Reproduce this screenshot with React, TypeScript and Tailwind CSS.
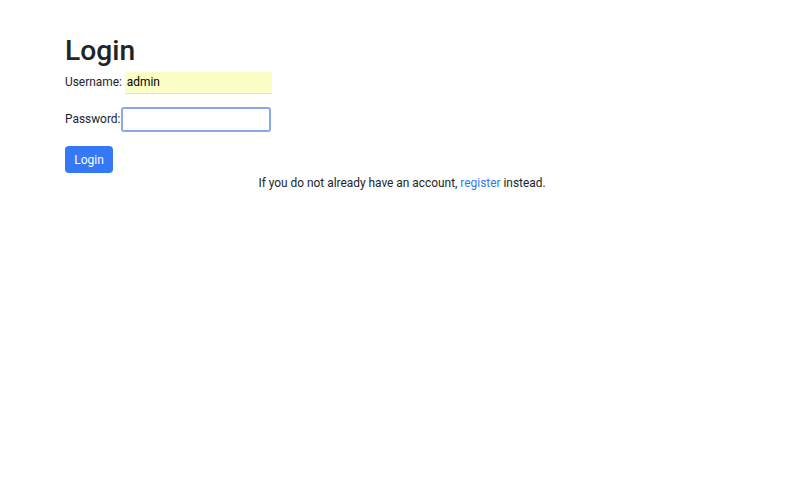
import React from "react";

export default function App() {
  return (
    <div className="min-h-screen bg-white text-[#212529]" style={{ fontFamily: "Roboto, 'Liberation Sans', Arial, sans-serif" }}>
      <div className="pl-[65px] pt-[33px]">
        <h1 className="text-[28.2px] font-medium leading-[36px]">Login</h1>
        <div className="mt-[3px] flex items-center h-[22px]">
          <span className="text-[11.9px] mr-[3px]">Username:</span>
          <div className="w-[147px] h-[22px] bg-[#fbffc6] border-b border-[#e3e3d0] flex items-center pl-[2px] text-[11.9px] text-black">admin</div>
        </div>
        <div className="mt-[13px] flex items-center h-[25px]">
          <span className="text-[11.9px] mr-[1px]">Password:</span>
          <div className="w-[150px] h-[25px] rounded-[3px] border-2 border-[#8aa8ee] bg-white"></div>
        </div>
        <button className="mt-[14px] h-[27px] w-[48px] rounded-[4px] bg-[#3478f6] text-white text-[12px] flex items-center justify-center">Login</button>
      </div>
      <p className="text-center text-[11.9px] mt-[2px] pr-[2px]">
        If you do not already have an account, <a className="text-[#3478f6]">register</a> instead.
      </p>
    </div>
  );
}
